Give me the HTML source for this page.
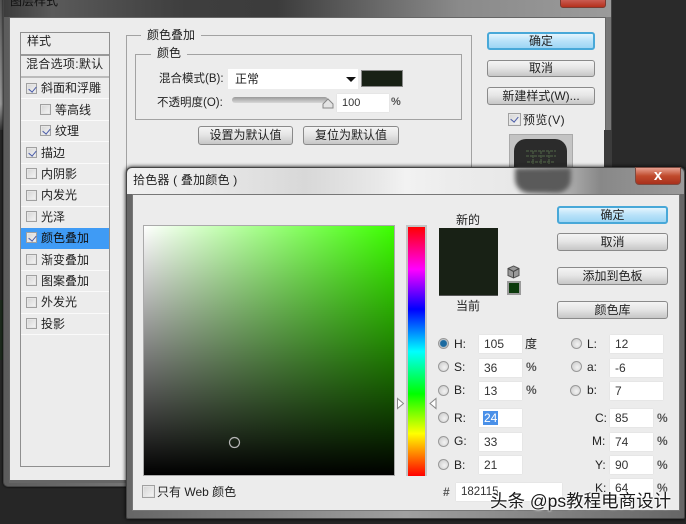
<!DOCTYPE html>
<html><head><meta charset="utf-8">
<style>
html,body{margin:0;padding:0;width:686px;height:524px;overflow:hidden;background:#262626}
*{box-sizing:border-box}
#r{position:relative;width:686px;height:524px;overflow:hidden;font-family:"Liberation Sans","WenQuanYi Zen Hei","Noto Sans CJK SC",sans-serif;font-size:12px;color:#222;background:#262626;filter:blur(.35px)}
.a{position:absolute}
.t{position:absolute;white-space:nowrap;line-height:16px;height:16px}
.cb{position:absolute;width:11px;height:11px;background:linear-gradient(135deg,#d4d4d4,#f6f6f6);border:1px solid #a0a0a0;box-shadow:inset 0 0 0 1px #e6e6e6}
.cb.on:after{content:"";position:absolute;left:2.500px;top:1px;width:4px;height:6px;border:solid #4a5ca8;border-width:0 1.500px 1.500px 0;transform:rotate(40deg)}
.btn{position:absolute;border:1px solid #8a8a8a;border-radius:3px;background:linear-gradient(#f4f4f4,#e6e6e6 45%,#c6c6c6);text-align:center;line-height:16px;color:#222}
.btn.def{border:2px solid #48a8d8;background:linear-gradient(#e4f4fd,#b9e2f9 50%,#9dd5f4);line-height:14px}
.in{position:absolute;background:#fff;height:18px;line-height:19px;padding-left:5px;color:#333;box-shadow:0 0 1px #ccc}
.rd{position:absolute;width:11px;height:11px;border-radius:50%;background:radial-gradient(circle at 60% 60%,#f2f2f2,#c8c8c8);border:1px solid #999}
.fs{position:absolute;border:1px solid #a2a2a2}
.lg{position:absolute;background:#ececec;padding:0 6px;line-height:16px;height:16px}
.sp{position:absolute;left:21px;width:88px;height:1px;background:#fafafa}
.pc{font-weight:bold;color:#555}
</style></head><body><div id="r">
<!-- left strip noise -->
<div class="a" style="left:0;top:0;width:3px;height:130px;background:linear-gradient(#555,#999 80%,#333)"></div>
<div class="a" style="left:0;top:300px;width:4px;height:60px;background:#1c2a1c"></div>

<!-- layer style dialog -->
<div class="a" style="left:3px;top:-6px;width:609px;height:493px;border-radius:5px;background:linear-gradient(90deg,#5c5c5c,#9a9a9a 50%,#777);border:1px solid #444;box-shadow:0 0 2px #000"></div>
<div class="a" style="left:4px;top:0;width:607px;height:17px;background:linear-gradient(90deg,#3c3c3c 0,#5a5a5a 8%,#3e3e3e 30%,#3c3c3c 45%,#6a6a6a 62%,#8a8a8a 75%,#9b9b9b 100%)"></div>
<div class="a" style="left:612px;top:0;width:74px;height:167px;background:#2a2a2a"></div>
<div class="a" style="left:560px;top:-8px;width:46px;height:16px;background:linear-gradient(#d88,#b5301c);border:1px solid #7a3a30;border-radius:3px"></div>
<div class="t" style="left:10px;top:-7px;color:#111">图层样式</div>
<div class="a" style="left:9px;top:17px;width:597px;height:463px;background:#ececec;border:1px solid #666;border-bottom:none"></div>
<div class="a" style="left:604px;top:130px;width:8px;height:40px;background:#3b3b3b"></div>

<!-- list -->
<div class="a" style="left:20px;top:32px;width:90px;height:435px;border:1px solid #8f8f8f;background:#ececec"></div>
<div class="a" style="left:21px;top:54px;width:88px;height:2px;background:#999"></div>
<div class="a" style="left:21px;top:76px;width:88px;height:2px;background:#bbb"></div>
<div class="t" style="left:27px;top:33px">样式</div>
<div class="t" style="left:26px;top:56px;letter-spacing:.3px">混合选项:默认</div>

<div class="sp" style="top:98px"></div>
<div class="sp" style="top:120px"></div>
<div class="sp" style="top:141px"></div>
<div class="sp" style="top:163px"></div>
<div class="sp" style="top:184px"></div>
<div class="sp" style="top:206px"></div>
<div class="sp" style="top:270px"></div>
<div class="sp" style="top:291px"></div>
<div class="sp" style="top:313px"></div>
<div class="sp" style="top:334px"></div>
<div class="a" style="left:21px;top:228px;width:88px;height:21px;background:#3f9bf5"></div>

<div class="cb on" style="left:26px;top:83px"></div><div class="t" style="left:41px;top:80px">斜面和浮雕</div>
<div class="cb" style="left:40px;top:104px"></div><div class="t" style="left:55px;top:102px">等高线</div>
<div class="cb on" style="left:40px;top:125px"></div><div class="t" style="left:55px;top:123px">纹理</div>
<div class="cb on" style="left:26px;top:147px"></div><div class="t" style="left:41px;top:145px">描边</div>
<div class="cb" style="left:26px;top:168px"></div><div class="t" style="left:41px;top:166px">内阴影</div>
<div class="cb" style="left:26px;top:190px"></div><div class="t" style="left:41px;top:187px">内发光</div>
<div class="cb" style="left:26px;top:211px"></div><div class="t" style="left:41px;top:209px">光泽</div>
<div class="cb on" style="left:26px;top:232px"></div><div class="t" style="left:41px;top:230px;color:#111">颜色叠加</div>
<div class="cb" style="left:26px;top:254px"></div><div class="t" style="left:41px;top:252px">渐变叠加</div>
<div class="cb" style="left:26px;top:275px"></div><div class="t" style="left:41px;top:273px">图案叠加</div>
<div class="cb" style="left:26px;top:297px"></div><div class="t" style="left:41px;top:294px">外发光</div>
<div class="cb" style="left:26px;top:318px"></div><div class="t" style="left:41px;top:316px">投影</div>

<!-- fieldsets -->
<div class="fs" style="left:126px;top:35px;width:346px;height:140px"></div>
<div class="lg" style="left:141px;top:27px">颜色叠加</div>
<div class="fs" style="left:135px;top:54px;width:327px;height:66px"></div>
<div class="lg" style="left:151px;top:45px">颜色</div>
<div class="t" style="left:159px;top:71px;font-size:11.5px">混合模式(B):</div>
<div class="a" style="left:228px;top:69px;width:130px;height:20px;background:#fff;line-height:20px;padding-left:7px">正常</div>
<div class="a" style="left:346px;top:77px;width:0;height:0;border:5px solid transparent;border-top:5px solid #111;border-bottom:none"></div>
<div class="a" style="left:361px;top:70px;width:42px;height:17px;background:#182115;border:1px solid #8a8a8a"></div>
<div class="t" style="left:157px;top:95px;font-size:11.5px">不透明度(O):</div>
<div class="a" style="left:232px;top:97px;width:96px;height:6px;background:linear-gradient(#9a9a9a,#d8d8d8);border-radius:3px"></div>
<svg class="a" style="left:322px;top:98px" width="12" height="11"><path d="M1 10V6L6 1l5 5v4z" fill="#e4e4e4" stroke="#888"/></svg>
<div class="in" style="left:337px;top:94px;width:52px;font-size:11px">100</div>
<div class="t pc" style="left:391px;top:94px;font-size:11px">%</div>
<div class="btn" style="left:198px;top:126px;width:95px;height:19px">设置为默认值</div>
<div class="btn" style="left:303px;top:126px;width:96px;height:19px">复位为默认值</div>

<div class="btn def" style="left:487px;top:32px;width:108px;height:18px">确定</div>
<div class="btn" style="left:487px;top:60px;width:108px;height:17px;line-height:15px">取消</div>
<div class="btn" style="left:487px;top:87px;width:108px;height:18px">新建样式(W)...</div>
<div class="cb on" style="left:508px;top:113px;width:13px;height:13px"></div>
<div class="t" style="left:523px;top:112px;letter-spacing:.4px">预览(V)</div>
<div class="a" style="left:509px;top:134px;width:64px;height:34px;background:#c4c4c4;border:1px solid #aaa"></div>
<div class="a" style="left:514px;top:139px;width:53px;height:52px;border-radius:12px;background:#2b2b2b"></div>
<svg class="a" style="left:525px;top:150px" width="32" height="15"><path d="M1 1h30M1 6h30M2 12h28M8 1v13M16 1v13M24 1v13" fill="none" stroke="#46553f" stroke-width="1.500" stroke-dasharray="3 1"/></svg>

<!-- dialog shadow bottom -->
<div class="a" style="left:9px;top:480px;width:117px;height:3px;background:#666"></div>

<!-- picker dialog -->
<div class="a" style="left:126px;top:167px;width:559px;height:352px;border-radius:5px 5px 2px 2px;background:linear-gradient(90deg,#666,#a0a0a0 50%,#666);border:1px solid #444;box-shadow:0 0 4px #000"></div>
<div class="a" style="left:127px;top:168px;width:557px;height:26px;border-radius:5px 5px 0 0;background:linear-gradient(90deg,#f0f0f0 0,#ececec 10%,#d8d8d8 32%,#e8e8e8 45%,#f2f2f2 50%,#ececec 58%,#e8e8e8 70%,#888 85%,#9a9a9a 100%)"></div>
<div class="a" style="left:515px;top:168px;width:56px;height:25px;border-radius:0 0 14px 14px;background:#5a5a5a;filter:blur(2.500px)"></div>
<div class="a" style="left:635px;top:167px;width:46px;height:18px;background:linear-gradient(#e8a090,#c04a2c 50%,#a8301c);border:1px solid #7c4a40;border-radius:0 0 4px 4px;color:#fff;text-align:center;font:bold 15px/15px 'Liberation Sans',sans-serif">x</div>
<div class="t" style="left:133px;top:172px;letter-spacing:.2px;color:#222">拾色器 ( 叠加颜色 )</div>
<div class="a" style="left:132px;top:194px;width:548px;height:317px;background:#ececec;border:1px solid #777"></div>

<div class="a" style="left:143px;top:225px;width:252px;height:251px;border:1px solid #aaa;background:linear-gradient(to top,#000,rgba(0,0,0,0)),linear-gradient(to right,#fff,#3cff00)"></div>
<svg class="a" style="left:228px;top:436px" width="14" height="14"><circle cx="6.500" cy="6.500" r="5" fill="none" stroke="#b5b5b5" stroke-width="1.200"/></svg>
<div class="a" style="left:406px;top:225px;width:21px;height:251px;border:2px solid #c4c4c4;border-bottom:none;background:linear-gradient(#f00,#f0f 17%,#00f 33%,#0ff 50%,#0f0 67%,#ff0 83%,#f00)"></div>
<svg class="a" style="left:396px;top:397px" width="42" height="14"><path d="M1.500 1.500v10l6-5z" fill="#fff" stroke="#888"/><path d="M40 1.500v10l-6-5z" fill="#fff" stroke="#888"/></svg>

<div class="t" style="left:456px;top:212px">新的</div>
<div class="a" style="left:439px;top:228px;width:59px;height:68px;background:#182115;border-bottom:1px solid #555"></div>
<div class="t" style="left:456px;top:298px">当前</div>
<svg class="a" style="left:507px;top:265px" width="13" height="14"><path d="M6.500 1L12 3.500v7L6.500 13 1 10.500v-7z" fill="#999" stroke="#555"/><path d="M1 3.500l5.500 3 5.500-3M6.500 6.500V13" fill="none" stroke="#444"/></svg>
<div class="a" style="left:507px;top:281px;width:14px;height:14px;background:#0c3a0c;border:2px solid #9a9a9a"></div>

<div class="btn def" style="left:557px;top:206px;width:111px;height:18px">确定</div>
<div class="btn" style="left:557px;top:233px;width:111px;height:18px">取消</div>
<div class="btn" style="left:557px;top:267px;width:111px;height:18px">添加到色板</div>
<div class="btn" style="left:557px;top:301px;width:111px;height:18px">颜色库</div>

<!-- HSB -->
<div class="rd" style="left:438px;top:338px;background:radial-gradient(circle,#1c6aa0 0 3px,#cfcfcf 4px)"></div><div class="t" style="left:454px;top:336px">H:</div>
<div class="in" style="left:479px;top:335px;width:43px">105</div><div class="t" style="left:525px;top:336px">度</div>
<div class="rd" style="left:438px;top:361px"></div><div class="t" style="left:454px;top:359px">S:</div>
<div class="in" style="left:479px;top:359px;width:43px">36</div><div class="t pc" style="left:526px;top:359px">%</div>
<div class="rd" style="left:438px;top:385px"></div><div class="t" style="left:454px;top:382px">B:</div>
<div class="in" style="left:479px;top:382px;width:43px">13</div><div class="t pc" style="left:526px;top:382px">%</div>
<div class="rd" style="left:438px;top:412px"></div><div class="t" style="left:454px;top:410px">R:</div>
<div class="in" style="left:479px;top:409px;width:43px"><span style="background:#4a90e8;color:#fff;padding:0 1px;margin-left:-1px">24</span></div>
<div class="rd" style="left:438px;top:436px"></div><div class="t" style="left:454px;top:433px">G:</div>
<div class="in" style="left:479px;top:433px;width:43px">33</div>
<div class="rd" style="left:438px;top:459px"></div><div class="t" style="left:454px;top:457px">B:</div>
<div class="in" style="left:479px;top:456px;width:43px">21</div>
<!-- Lab -->
<div class="rd" style="left:571px;top:338px"></div><div class="t" style="left:587px;top:336px">L:</div>
<div class="in" style="left:610px;top:335px;width:53px">12</div>
<div class="rd" style="left:571px;top:361px"></div><div class="t" style="left:587px;top:359px">a:</div>
<div class="in" style="left:610px;top:359px;width:53px">-6</div>
<div class="rd" style="left:570px;top:385px"></div><div class="t" style="left:587px;top:382px">b:</div>
<div class="in" style="left:610px;top:382px;width:53px">7</div>
<!-- CMYK -->
<div class="t" style="left:595px;top:410px">C:</div><div class="in" style="left:610px;top:409px;width:43px">85</div><div class="t pc" style="left:657px;top:410px">%</div>
<div class="t" style="left:592px;top:433px">M:</div><div class="in" style="left:610px;top:433px;width:43px">74</div><div class="t pc" style="left:657px;top:433px">%</div>
<div class="t" style="left:595px;top:457px">Y:</div><div class="in" style="left:610px;top:456px;width:43px">90</div><div class="t pc" style="left:657px;top:457px">%</div>
<div class="t" style="left:595px;top:480px">K:</div><div class="in" style="left:610px;top:479px;width:43px">64</div><div class="t pc" style="left:657px;top:480px">%</div>

<div class="t pc" style="left:443px;top:484px">#</div>
<div class="in" style="left:456px;top:483px;width:106px;font-size:11.5px">182115</div>

<div class="cb" style="left:142px;top:485px;width:13px;height:13px"></div>
<div class="t" style="left:157px;top:484px">只有 Web 颜色</div>

<div class="t" style="left:490px;top:491px;font-size:17.500px;line-height:20px;height:20px;color:#1a1a1a;text-shadow:0 0 2px #fff,0 0 2px #fff,0 0 3px #fff">头条 @ps教程电商设计</div>
</div></body></html>
